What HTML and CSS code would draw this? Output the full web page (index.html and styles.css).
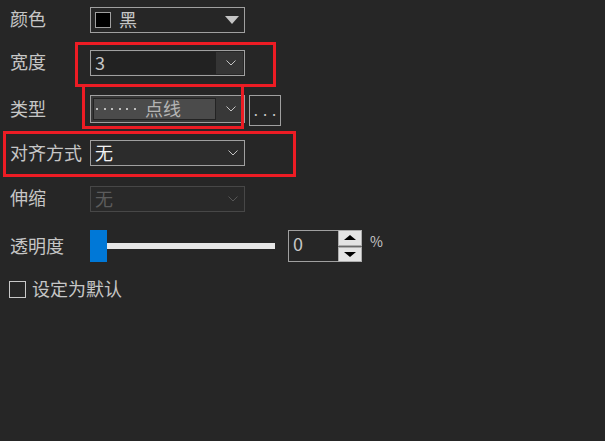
FILE: index.html
```html
<!DOCTYPE html>
<html>
<head>
<meta charset="utf-8">
<link rel="stylesheet" href="styles.css">
</head>
<body>
<div class="panel">
  <div class="row r-color">
    <span class="label">颜色</span>
    <div class="combo combo-color">
      <span class="swatch"></span>
      <span class="value">黑</span>
      <span class="tri"></span>
    </div>
  </div>
  <div class="row r-width">
    <span class="label">宽度</span>
    <div class="combo combo-edit">
      <span class="field"><span class="value">3</span></span>
      <span class="btn"><svg class="chev" width="10" height="6" viewBox="0 0 10 6"><polyline points="0.5,0.5 5,5 9.5,0.5" fill="none" stroke="#c4c4c4" stroke-width="1"/></svg></span>
    </div>
  </div>
  <div class="row r-type">
    <span class="label">类型</span>
    <div class="combo combo-type">
      <span class="field"><span class="dots"></span><span class="tname">点线</span></span>
      <span class="btn"><svg class="chev" width="10" height="6" viewBox="0 0 10 6"><polyline points="0.5,0.5 5,5 9.5,0.5" fill="none" stroke="#c4c4c4" stroke-width="1"/></svg></span>
    </div>
    <div class="more">...</div>
  </div>
  <div class="row r-align">
    <span class="label">对齐方式</span>
    <div class="combo combo-align">
      <span class="value">无</span>
      <svg class="chev" width="10" height="6" viewBox="0 0 10 6"><polyline points="0.5,0.5 5,5 9.5,0.5" fill="none" stroke="#c4c4c4" stroke-width="1"/></svg>
    </div>
  </div>
  <div class="row r-stretch">
    <span class="label">伸缩</span>
    <div class="combo combo-disabled">
      <span class="value">无</span>
      <svg class="chev" width="10" height="6" viewBox="0 0 10 6"><polyline points="0.5,0.5 5,5 9.5,0.5" fill="none" stroke="#555555" stroke-width="1"/></svg>
    </div>
  </div>
  <div class="row r-opacity">
    <span class="label">透明度</span>
    <div class="slider">
      <span class="thumb"></span>
      <span class="track"></span>
    </div>
    <div class="spin">
      <span class="spin-field">0</span>
      <span class="spin-btns">
        <span class="sbtn"><span class="up"></span></span>
        <span class="sbtn"><span class="down"></span></span>
      </span>
    </div>
    <span class="pct">%</span>
  </div>
  <div class="row r-check">
    <span class="checkbox"></span>
    <span class="check-label">设定为默认</span>
  </div>
</div>
<div class="mark mark-width"></div>
<div class="mark mark-type"></div>
<div class="mark mark-align"></div>
</body>
</html>
```
FILE: styles.css
```css
html, body {
  margin: 0;
  padding: 0;
}
body {
  background: #262626;
  width: 605px;
  height: 441px;
  overflow: hidden;
  position: relative;
  font-family: "Noto Sans CJK SC", "Noto Sans", sans-serif;
  font-size: 18px;
  color: #c6c6c6;
}
.panel {
  display: flex;
  flex-direction: column;
  padding-left: 10px;
}
.row {
  display: flex;
  align-items: center;
}
.r-color { height: 39px; }
.r-width { height: 47px; }
.r-type { height: 44px; }
.r-align { height: 46px; }
.r-stretch { height: 45px; }
.r-opacity { height: 50px; }
.r-check { height: 36px; }

.label {
  width: 80px;
  line-height: 1;
  margin-top: -3px;
  flex: none;
}
.combo {
  box-sizing: border-box;
  width: 155px;
  height: 26px;
  border: 1px solid #a0a0a0;
  display: flex;
  align-items: center;
  flex: none;
}
.combo-color {
  padding: 0 5px 0 4px;
}
.swatch {
  box-sizing: border-box;
  width: 16px;
  height: 16px;
  background: #000;
  border: 1px solid #a0a0a0;
  margin-top: 1px;
}
.value {
  line-height: 1;
  margin-top: -2px;
}
.combo-color .value {
  margin-left: 8px;
}
.tri {
  margin-left: auto;
  width: 0;
  height: 0;
  border-left: 7px solid transparent;
  border-right: 7px solid transparent;
  border-top: 8px solid #c4c4c4;
}
.combo-edit {
  padding: 1px;
  align-items: stretch;
}
.combo-edit .field {
  flex: 1;
  background: #222222;
  display: flex;
  align-items: center;
  padding-left: 3px;
  line-height: 1;
}
.btn {
  width: 27px;
  background: #353535;
  display: flex;
  align-items: center;
  justify-content: center;
  padding-left: 2px;
  box-sizing: border-box;
}
.combo-type {
  height: 28px;
  background: #383838;
  padding: 1px;
  align-items: stretch;
}
.r-type {
  align-items: flex-start;
  padding-top: 9px;
  box-sizing: border-box;
}
.r-type .label {
  margin-top: 4px;
}
.combo-type .field {
  flex: 1;
  box-sizing: border-box;
  margin: 1px 0 1px 1px;
  background: #4b4b4b;
  border: 1px solid #232323;
  display: flex;
  align-items: center;
  padding-left: 2px;
}
.dots {
  width: 40px;
  height: 2px;
  background: repeating-linear-gradient(to right, #bdbdbd 0 2px, transparent 2px 7.6px);
}
.tname {
  margin-left: 9px;
  line-height: 1;
  margin-top: -2px;
  color: #b4b4b4;
}
.combo-type .btn {
  background: transparent;
  width: 27px;
}
.more {
  box-sizing: border-box;
  width: 32px;
  height: 31px;
  border: 1px solid #a0a0a0;
  margin-left: 4px;
  display: flex;
  align-items: flex-end;
  justify-content: center;
  line-height: 1;
  letter-spacing: 5px;
  padding: 0 0 8px 5px;
  font-size: 15px;
  color: #c8c8c8;
}
.combo-align {
  background: #2c2c2c;
  padding: 0 6px 0 4px;
}
.combo-align .value {
  color: #f2f2f2;
}
.chev {
  margin-left: auto;
  display: block;
}
.btn .chev {
  margin-left: 0;
}
.combo-disabled {
  border-color: #474747;
  background: #292929;
  padding: 0 6px 0 4px;
}
.combo-disabled .value {
  color: #5c5c5c;
}
.slider {
  position: relative;
  display: flex;
  align-items: center;
  width: 185px;
  height: 32px;
}
.thumb {
  width: 17px;
  height: 32px;
  background: #0078d7;
  flex: none;
}
.track {
  width: 168px;
  height: 6px;
  background: #e6e6e6;
}
.spin {
  display: flex;
  margin-left: 13px;
  height: 32px;
}
.spin-field {
  box-sizing: border-box;
  width: 50px;
  height: 32px;
  border: 1px solid #a0a0a0;
  border-right: none;
  padding: 1px 0 0 4px;
  line-height: 1.3;
}
.spin-btns {
  display: flex;
  flex-direction: column;
  width: 24px;
  height: 32px;
  gap: 1px;
  background: #6a6a6a;
}
.sbtn {
  box-sizing: border-box;
  flex: 1;
  background: #e3e3e3;
  border: 1px solid #adadad;
  display: flex;
  align-items: center;
  justify-content: center;
}
.up {
  width: 0;
  height: 0;
  border-left: 6px solid transparent;
  border-right: 6px solid transparent;
  border-bottom: 5px solid #000;
}
.down {
  width: 0;
  height: 0;
  border-left: 6px solid transparent;
  border-right: 6px solid transparent;
  border-top: 5px solid #000;
}
.pct {
  margin-left: 8px;
  font-size: 14px;
  margin-top: -10px;
  line-height: 1;
}
.r-check {
  margin-left: -1px;
}
.checkbox {
  box-sizing: border-box;
  width: 17px;
  height: 17px;
  border: 1px solid #c8c8c8;
}
.check-label {
  margin-left: 6px;
  line-height: 1;
  margin-top: -2px;
}
.mark {
  position: absolute;
  box-sizing: border-box;
  border: 3px solid #ed1c24;
}
.mark-width {
  left: 75px;
  top: 42px;
  width: 201px;
  height: 45px;
}
.mark-type {
  left: 82px;
  top: 84px;
  width: 162px;
  height: 45px;
}
.mark-align {
  left: 3px;
  top: 131px;
  width: 293px;
  height: 46px;
}
```
